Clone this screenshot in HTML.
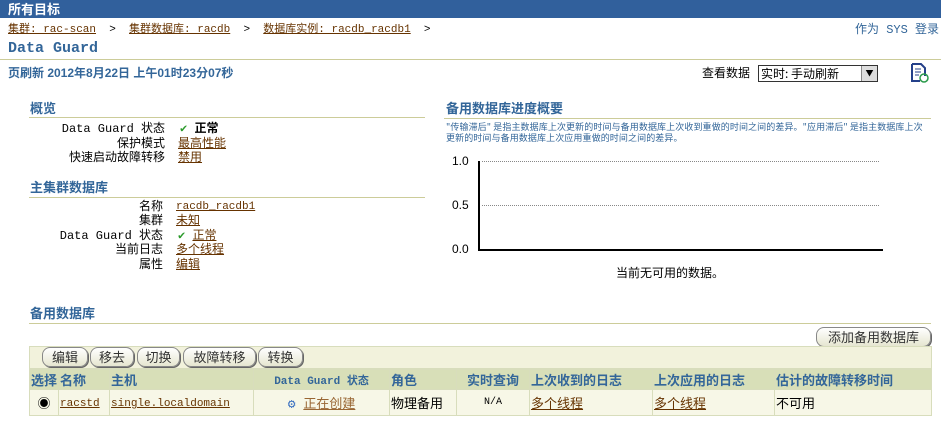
<!DOCTYPE html>
<html><head><meta charset="utf-8"><style>
*{margin:0;padding:0;box-sizing:border-box}
body{width:941px;height:426px;background:#fff;font-family:"Liberation Mono","Noto Sans CJK SC",monospace;font-size:12px;color:#000;position:relative;overflow:hidden}
.a{position:absolute;white-space:nowrap;line-height:14px}
.lk{color:#663300;text-decoration:underline}
.bl{color:#336699}
.h{color:#336699;font-weight:bold;font-size:13px}
.ln{position:absolute;height:1px;background:#cccc99}
.r{text-align:right}
.btn{position:absolute;top:347px;height:20px;border:1px solid #888;border-radius:8px;background:linear-gradient(#fff,#e6e6d0);box-shadow:1px 1px 0 #666;font-size:13px;line-height:18px;text-align:center;color:#333;font-family:"Noto Sans CJK SC",sans-serif}
table{position:absolute;left:29px;top:369px;width:903px;border-collapse:collapse}
td,th{border:1px solid #d8ddbc;font-size:13px;text-align:left;padding:0 1px;white-space:nowrap}
th{background:#d8dfb8;color:#336699;height:17px;font-family:"Noto Sans CJK SC",sans-serif}
td{background:#f7f7e7;height:26px}
</style></head><body>
<div class="a" style="left:0;top:0;width:941px;height:18px;background:#31609c"></div>
<div class="a" style="left:8px;top:2px;color:#fff;font-weight:bold;font-size:13px;font-family:'Noto Sans CJK SC',sans-serif">所有目标</div>
<div class="a" style="left:8px;top:23px;font-size:11px"><span class="lk">集群: rac-scan</span>&nbsp; &gt;&nbsp;&nbsp;<span class="lk">集群数据库: racdb</span>&nbsp; &gt;&nbsp;&nbsp;<span class="lk">数据库实例: racdb_racdb1</span>&nbsp; &gt;</div>
<div class="a bl" style="left:855px;top:23px;font-size:12px">作为 SYS 登录</div>
<div class="a bl" style="left:8px;top:42px;font-size:15px;font-weight:bold">Data Guard</div>
<div class="ln" style="left:0;top:59px;width:941px"></div>
<div class="a bl" style="left:8px;top:66px;font-weight:bold;font-family:'Liberation Sans','Noto Sans CJK SC',sans-serif">页刷新 2012年8月22日 上午01时23分07秒</div>
<div class="a" style="left:702px;top:66px;font-family:'Noto Sans CJK SC',sans-serif">查看数据</div>
<div class="a" style="left:758px;top:65px;width:120px;height:17px;border:1px solid #333;background:#fff;font-size:12px;line-height:15px;padding-left:2px;font-family:'Noto Sans CJK SC',sans-serif">实时: 手动刷新<span style="position:absolute;right:0;top:0;width:16px;height:15px;background:#ddd;border-left:1px solid #888;font-size:8px;text-align:center">▼</span></div>
<svg class="a" style="left:910px;top:63px" width="20" height="20"><path d="M2 1h9l4 4v8M2 1v17h8" fill="none" stroke="#24408a" stroke-width="2"/><path d="M5 6h6M5 9h6M5 12h4" stroke="#24408a"/><circle cx="14" cy="15" r="4" fill="none" stroke="#2a9a4a" stroke-width="1.5"/></svg>

<div class="a h" style="left:30px;top:103px">概览</div>
<div class="ln" style="left:29px;top:117px;width:396px"></div>
<div class="a r" style="left:20px;top:122px;width:145px;font-size:12px">Data Guard 状态</div>
<div class="a" style="left:180px;top:122px"><span style="color:#2a9a2a">✔</span> <b>正常</b></div>
<div class="a r" style="left:20px;top:137px;width:145px">保护模式</div>
<div class="a lk" style="left:178px;top:137px">最高性能</div>
<div class="a r" style="left:20px;top:151px;width:145px">快速启动故障转移</div>
<div class="a lk" style="left:178px;top:151px">禁用</div>

<div class="a h" style="left:30px;top:182px">主集群数据库</div>
<div class="ln" style="left:29px;top:197px;width:396px"></div>
<div class="a r" style="left:20px;top:200px;width:143px">名称</div>
<div class="a lk" style="left:176px;top:200px;font-size:11px">racdb_racdb1</div>
<div class="a r" style="left:20px;top:214px;width:143px">集群</div>
<div class="a lk" style="left:176px;top:214px">未知</div>
<div class="a r" style="left:20px;top:229px;width:143px">Data Guard 状态</div>
<div class="a" style="left:178px;top:229px"><span style="color:#2a9a2a">✔</span> <span class="lk">正常</span></div>
<div class="a r" style="left:20px;top:243px;width:143px">当前日志</div>
<div class="a lk" style="left:176px;top:243px">多个线程</div>
<div class="a r" style="left:20px;top:258px;width:143px">属性</div>
<div class="a lk" style="left:176px;top:258px">编辑</div>

<div class="a h" style="left:446px;top:103px">备用数据库进度概要</div>
<div class="ln" style="left:444px;top:118px;width:487px"></div>
<div class="a bl" style="left:446px;top:121px;font-size:9px;line-height:11px;letter-spacing:0.1px;font-family:'Noto Sans CJK SC',sans-serif">"传输滞后" 是指主数据库上次更新的时间与备用数据库上次收到重做的时间之间的差异。"应用滞后" 是指主数据库上次<br>更新的时间与备用数据库上次应用重做的时间之间的差异。</div>
<div class="a" style="left:452px;top:154px;font-family:'Liberation Sans',sans-serif;font-size:12px">1.0</div>
<div class="a" style="left:452px;top:198px;font-family:'Liberation Sans',sans-serif;font-size:12px">0.5</div>
<div class="a" style="left:452px;top:242px;font-family:'Liberation Sans',sans-serif;font-size:12px">0.0</div>
<div class="a" style="left:482px;top:161px;width:397px;border-top:1px dotted #888"></div>
<div class="a" style="left:482px;top:205px;width:397px;border-top:1px dotted #888"></div>
<div class="a" style="left:478px;top:161px;width:2px;height:89px;background:#000"></div>
<div class="a" style="left:478px;top:249px;width:405px;height:2px;background:#000"></div>
<div class="a" style="left:616px;top:266px;font-family:'Noto Sans CJK SC',sans-serif">当前无可用的数据。</div>

<div class="a h" style="left:30px;top:308px">备用数据库</div>
<div class="ln" style="left:29px;top:323px;width:902px"></div>
<div class="btn" style="left:816px;top:327px;width:115px">添加备用数据库</div>
<div class="a" style="left:29px;top:346px;width:903px;height:23px;background:#f2f2dc;border:1px solid #d8ddbc"></div>
<div class="btn" style="left:42px;width:46px">编辑</div>
<div class="btn" style="left:90px;width:44px">移去</div>
<div class="btn" style="left:137px;width:43px">切换</div>
<div class="btn" style="left:183px;width:73px">故障转移</div>
<div class="btn" style="left:258px;width:45px">转换</div>
<table>
<tr><th style="width:28px">选择</th><th style="width:51px">名称</th><th style="width:144px">主机</th><th style="width:136px;text-align:center;font-family:'Liberation Mono','Noto Sans CJK SC',monospace;font-size:11px">Data Guard 状态</th><th style="width:67px">角色</th><th style="width:73px;text-align:center">实时查询</th><th style="width:123px">上次收到的日志</th><th style="width:122px">上次应用的日志</th><th>估计的故障转移时间</th></tr>
<tr><td style="text-align:center;vertical-align:top;padding-top:3px">◉</td><td><span class="lk" style="font-size:11px">racstd</span></td><td><span class="lk" style="font-size:11px">single.localdomain</span></td><td style="text-align:center"><span style="color:#3a70c0">⚙</span> <span class="lk" style="color:#996633">正在创建</span></td><td>物理备用</td><td style="text-align:center;font-size:10px">N/A</td><td><span class="lk">多个线程</span></td><td><span class="lk">多个线程</span></td><td>不可用</td></tr>
</table>
</body></html>
